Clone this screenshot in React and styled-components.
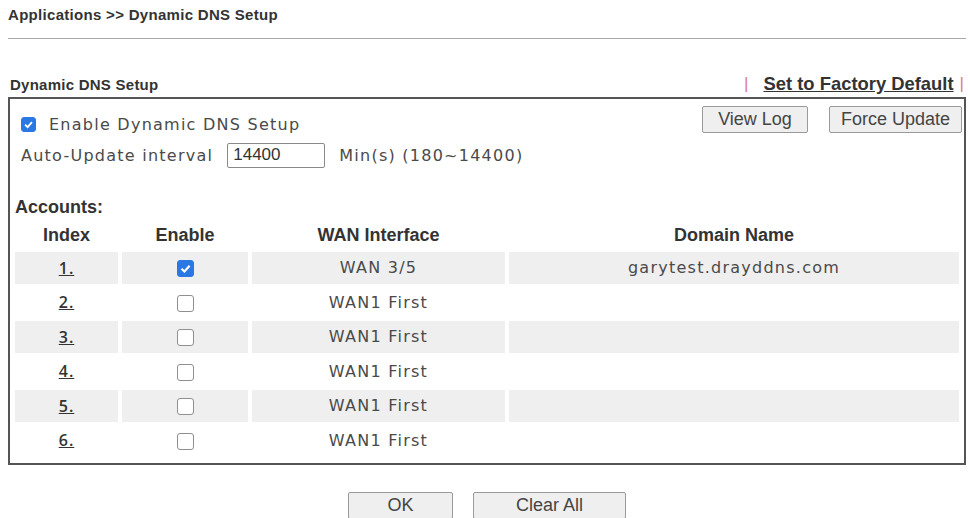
import React from "react";
import styled, { createGlobalStyle } from "styled-components";

const Global = createGlobalStyle`
  html, body { margin: 0; padding: 0; background: #fff; }
  body { font-family: "Liberation Sans", Arial, sans-serif; color: #333; }
`;

const bodyFont = `"DejaVu Sans", Verdana, sans-serif`;

const Page = styled.div`
  padding: 5px 4px 0 8px;
`;

const Title = styled.div`
  font: bold 15px/20px "Liberation Sans", Arial, sans-serif;
  letter-spacing: 0.3px;
  color: #333;
`;

const Rule = styled.div`
  height: 1px;
  background: #a8a8a8;
  margin-top: 13px;
`;

const SectionHead = styled.div`
  display: flex;
  justify-content: space-between;
  align-items: center;
  height: 22px;
  margin-top: 34px;
  margin-bottom: 2px;
  padding: 0 2px 0 2px;
`;

const SectionTitle = styled.div`
  font: bold 15px "Liberation Sans", Arial, sans-serif;
  letter-spacing: 0.25px;
  color: #333;
`;

const Links = styled.div`
  display: flex;
  align-items: center;
  font: bold 18.4px "Liberation Sans", Arial, sans-serif;
`;

const Pipe = styled.span`
  color: #e07896;
  font-weight: normal;
  font-size: 17px;
  margin: 0 ${(p) => p.$r || 0}px 0 ${(p) => p.$l || 0}px;
`;

const Link = styled.a`
  color: #333;
  text-decoration: underline;
  cursor: pointer;
`;

const Box = styled.div`
  border: 2px solid #555;
  padding: 7px 1px 4px 1px;
`;

const TopRow = styled.div`
  display: flex;
  justify-content: space-between;
  align-items: flex-start;
`;

const OptionCol = styled.div`
  display: flex;
  flex-direction: column;
  gap: 5px;
  margin-top: 5px;
  padding-left: 10px;
`;

const Line = styled.div`
  display: flex;
  align-items: center;
  gap: ${(p) => p.$gap || 13}px;
  font: 16px ${bodyFont};
  letter-spacing: 1.25px;
  color: #4a4a4a;
  height: 26px;
`;

const Input = styled.input`
  width: 98px;
  height: 25px;
  box-sizing: border-box;
  border: 1px solid #8a8a8a;
  border-radius: 2px;
  font: 17px "Liberation Sans", Arial, sans-serif;
  color: #333;
  padding: 0 5px;
`;

const Btns = styled.div`
  display: flex;
  gap: 21px;
  padding-right: 1px;
`;

const Button = styled.button`
  font: 18px "Liberation Sans", Arial, sans-serif;
  color: #444;
  background: #efefef;
  border: 1px solid #9a9a9a;
  border-radius: 2px;
  height: 27px;
  padding: 0;
  width: ${(p) => p.$w}px;
`;

const Accounts = styled.div`
  font: bold 18px/22px "Liberation Sans", Arial, sans-serif;
  color: #333;
  margin-top: 28px;
  padding-left: 4px;
`;

const Table = styled.table`
  width: 100%;
  table-layout: fixed;
  border-collapse: separate;
  border-spacing: 4px 3px;
`;

const Th = styled.th`
  font: bold 18px "Liberation Sans", Arial, sans-serif;
  color: #333;
  height: 28px;
  padding: 0;
  text-align: center;
  width: ${(p) => p.$w || "auto"};
`;

const Tr = styled.tr`
  background: ${(p) => (p.$odd ? "#efefef" : "#fff")};
`;

const Td = styled.td`
  height: 31.5px;
  text-align: center;
  font: 16px ${bodyFont};
  letter-spacing: 1.25px;
  color: #4a4a4a;
  padding: 0;
`;

const IndexLink = styled.a`
  font: 600 16px "Open Sans", sans-serif;
  letter-spacing: 1px;
  color: #333;
  text-decoration: underline;
`;

const Check = styled.span`
  display: inline-flex;
  align-items: center;
  justify-content: center;
  width: ${(p) => p.$size}px;
  height: ${(p) => p.$size}px;
  box-sizing: border-box;
  border-radius: 3px;
  vertical-align: middle;
  flex: none;
  border: 1px solid ${(p) => (p.$on ? "#2a78e4" : "#8f8f8f")};
  background: ${(p) => (p.$on ? "#2a78e4" : "#fff")};
`;

const CheckBox = ({ on, size = 16 }) => (
  <Check $on={on} $size={size}>
    {on && (
      <svg width={size - 4} height={size - 4} viewBox="0 0 12 12">
        <path d="M2.3 6.2 L5 8.8 L9.8 3.4" fill="none" stroke="#fff" strokeWidth="2" />
      </svg>
    )}
  </Check>
);

const Footer = styled.div`
  display: flex;
  justify-content: center;
  gap: 20px;
  margin-top: 27px;
  padding-left: 0;
`;

const rows = [
  { i: "1.", on: true, wan: "WAN 3/5", dom: "garytest.drayddns.com" },
  { i: "2.", on: false, wan: "WAN1 First", dom: "" },
  { i: "3.", on: false, wan: "WAN1 First", dom: "" },
  { i: "4.", on: false, wan: "WAN1 First", dom: "" },
  { i: "5.", on: false, wan: "WAN1 First", dom: "" },
  { i: "6.", on: false, wan: "WAN1 First", dom: "" },
];

export default function App() {
  return (
    <>
      <Global />
      <Page>
        <Title>Applications &gt;&gt; Dynamic DNS Setup</Title>
        <Rule />
        <SectionHead>
          <SectionTitle>Dynamic DNS Setup</SectionTitle>
          <Links>
            <Pipe $r={15}>|</Pipe>
            <Link>Set to Factory Default</Link>
            <Pipe $l={6}>|</Pipe>
          </Links>
        </SectionHead>
        <Box>
          <TopRow>
            <OptionCol>
              <Line>
                <CheckBox on size={15} />
                <span>Enable Dynamic DNS Setup</span>
              </Line>
              <Line $gap={14}>
                <span>Auto-Update interval</span>
                <Input defaultValue="14400" />
                <span>Min(s) (180~14400)</span>
              </Line>
            </OptionCol>
            <Btns>
              <Button $w={106}>View Log</Button>
              <Button $w={133}>Force Update</Button>
            </Btns>
          </TopRow>
          <Accounts>Accounts:</Accounts>
          <Table>
            <thead>
              <tr>
                <Th $w="103px">Index</Th>
                <Th $w="126px">Enable</Th>
                <Th $w="253px">WAN Interface</Th>
                <Th>Domain Name</Th>
              </tr>
            </thead>
            <tbody>
              {rows.map((r, k) => (
                <Tr key={r.i} $odd={k % 2 === 0}>
                  <Td>
                    <IndexLink>{r.i}</IndexLink>
                  </Td>
                  <Td>
                    <CheckBox on={r.on} size={17} />
                  </Td>
                  <Td>{r.wan}</Td>
                  <Td>{r.dom}</Td>
                </Tr>
              ))}
            </tbody>
          </Table>
        </Box>
        <Footer>
          <Button $w={105}>OK</Button>
          <Button $w={153}>Clear All</Button>
        </Footer>
      </Page>
    </>
  );
}
